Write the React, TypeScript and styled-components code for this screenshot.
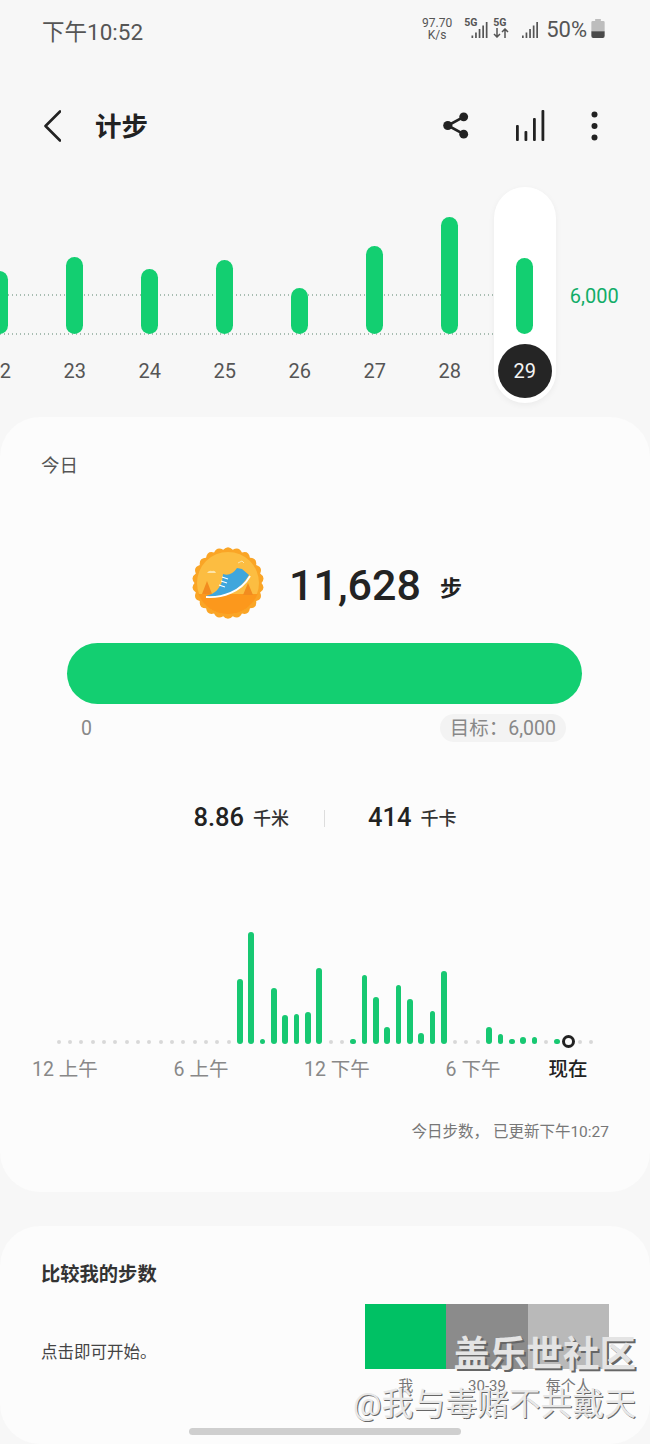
import styled, { createGlobalStyle } from "styled-components";

const GlobalStyle = createGlobalStyle`
  html, body {
    margin: 0;
    padding: 0;
    background: #f7f7f7;
  }
  * {
    box-sizing: border-box;
  }
`;

const Page = styled.div`
  position: relative;
  width: 650px;
  height: 1444px;
  overflow: hidden;
  background: #f7f7f7;
  font-family: Roboto, "Noto Sans CJK SC", sans-serif;
  color: #222;
`;

const StatusBar = styled.div`
  height: 64px;
  padding: 0 45px 0 42px;
  display: flex;
  justify-content: space-between;
  align-items: flex-start;
  color: #555;
`;

const StatusTime = styled.div`
  margin-top: 18px;
  font-size: 22.5px;
  line-height: 28px;
`;

const StatusIcons = styled.div`
  margin-top: 17px;
  display: flex;
  align-items: flex-start;
`;

const NetSpeed = styled.div`
  width: 32px;
  margin: 1px 11px 0 0;
  font-size: 12px;
  line-height: 11.5px;
  text-align: center;
`;

const SimSlot = styled.div<{ $width: number; $gap: number }>`
  position: relative;
  width: ${(p) => p.$width}px;
  height: 21px;
  margin-right: ${(p) => p.$gap}px;
  display: flex;
  justify-content: flex-end;
  align-items: flex-end;
`;

const SimTag = styled.span`
  position: absolute;
  left: 0;
  top: 1px;
  font-size: 10.5px;
  line-height: 10px;
  font-weight: 700;
`;

const BatteryText = styled.span`
  margin: 0 4px 0 0;
  font-size: 22px;
  line-height: 26px;
`;

const BatteryShape = styled.svg`
  margin-top: 2px;
`;

const Toolbar = styled.div`
  height: 123px;
  padding: 0 52px 0 44px;
  display: flex;
  align-items: center;
  color: #222;
`;

const ToolbarTitle = styled.h1`
  margin: 2px 0 0 34px;
  flex: 1;
  font-size: 26.5px;
  line-height: 34px;
  font-weight: 700;
`;

const ToolbarActions = styled.div`
  display: flex;
  align-items: center;
  gap: 46px;
`;

const WeekStrip = styled.div`
  position: relative;
  height: 230px;
`;

const GuideLine = styled.div<{ $top: number }>`
  position: absolute;
  left: 0;
  top: ${(p) => p.$top}px;
  width: 494px;
  height: 2px;
  background: repeating-linear-gradient(to right, #a8bdb2 0 1.5px, transparent 1.5px 4px);
`;

const DayRow = styled.div`
  position: relative;
  display: flex;
  margin-left: -37.7px;
`;

const DayColumn = styled.div<{ $selected?: boolean }>`
  width: 62px;
  height: 216px;
  margin: 0 6.5px;
  display: flex;
  flex-direction: column;
  align-items: center;
  border-radius: 31px;
  background: ${(p) => (p.$selected ? "#fff" : "transparent")};
  box-shadow: ${(p) => (p.$selected ? "0 2px 6px rgba(0, 0, 0, 0.05)" : "none")};
`;

const DayBarSlot = styled.div`
  height: 147px;
  display: flex;
  align-items: flex-end;
`;

const DayBar = styled.div`
  width: 17px;
  border-radius: 9px;
  background: #13cf71;
`;

const DayLabel = styled.div<{ $selected?: boolean }>`
  width: 54px;
  height: 54px;
  margin-top: 10px;
  border-radius: 50%;
  display: flex;
  align-items: center;
  justify-content: center;
  font-size: 20px;
  color: ${(p) => (p.$selected ? "#f4f4f4" : "#555")};
  background: ${(p) => (p.$selected ? "#252525" : "transparent")};
`;

const GoalValue = styled.div`
  margin: 97px 0 0 7.5px;
  font-size: 20px;
  line-height: 24px;
  color: #12ad68;
`;

const Card = styled.section<{ $height: number; $gap: number }>`
  height: ${(p) => p.$height}px;
  margin-bottom: ${(p) => p.$gap}px;
  padding: 0 41px;
  border-radius: 40px;
  background: #fcfcfc;
`;

const CardLabel = styled.div`
  padding-top: 38px;
  font-size: 18.5px;
  line-height: 22px;
  color: #555;
`;

const Hero = styled.div`
  margin-top: 70px;
  height: 72px;
  padding-left: 4px;
  display: flex;
  justify-content: center;
  align-items: center;
`;

const StepCount = styled.div`
  margin: 4px 0 0 25px;
  font-size: 43px;
  line-height: 50px;
  font-weight: 500;
  color: #232323;
`;

const StepUnit = styled.div`
  margin: 12px 0 0 19px;
  font-size: 22px;
  line-height: 28px;
  font-weight: 700;
`;

const Progress = styled.div`
  height: 61px;
  margin: 24px 27px 0 26px;
  border-radius: 31px;
  background: #13cf71;
`;

const GoalRow = styled.div`
  margin-top: 10px;
  padding: 0 43px 0 40px;
  display: flex;
  justify-content: space-between;
  align-items: flex-start;
  font-size: 19.5px;
  line-height: 30px;
  color: #888;
`;

const GoalPill = styled.div`
  height: 28px;
  padding: 0 10px;
  border-radius: 14px;
  background: #f3f3f3;
`;

const Stats = styled.div`
  margin-top: 58px;
  height: 30px;
  display: flex;
  justify-content: center;
  align-items: center;
`;

const StatValue = styled.span`
  font-size: 25.5px;
  font-weight: 500;
  color: #222;
`;

const StatUnit = styled.span`
  margin-left: 9px;
  font-size: 18px;
  font-weight: 500;
  color: #333;
`;

const StatDivider = styled.div`
  width: 1px;
  height: 17px;
  margin: 2px 43px 0 35px;
  background: #ddd;
`;

const Ticks = styled.div`
  margin: 92px 0 0 12px;
  height: 120px;
  display: flex;
  align-items: flex-end;
`;

const TickSlot = styled.div`
  width: 11.333px;
  flex: none;
  display: flex;
  justify-content: center;
  align-items: flex-end;
`;

const TickDot = styled.div`
  width: 4px;
  height: 4px;
  border-radius: 50%;
  background: #d8d8d8;
`;

const TickBar = styled.div`
  width: 5.5px;
  border-radius: 3px;
  background: #17c872;
`;

const TickNow = styled.div`
  flex: none;
  width: 13px;
  height: 13px;
  margin-bottom: -4px;
  border: 3.5px solid #222;
  border-radius: 50%;
  background: #fcfcfc;
`;

const Axis = styled.div`
  margin: 14px 0 0 -44px;
  display: flex;
  font-size: 19.5px;
  line-height: 24px;
  color: #888;
`;

const AxisLabel = styled.div`
  width: 136px;
  text-align: center;
`;

const AxisNow = styled.div`
  width: 54px;
  text-align: center;
  font-weight: 500;
  color: #222;
`;

const Updated = styled.div`
  margin-top: 40px;
  font-size: 15.5px;
  line-height: 20px;
  text-align: right;
  color: #777;
`;

const CompareTitle = styled.h2`
  margin: 0;
  padding-top: 37px;
  font-size: 19.3px;
  line-height: 24px;
  font-weight: 700;
  color: #333;
`;

const CompareRow = styled.div`
  margin-top: 17px;
  display: flex;
  justify-content: space-between;
`;

const CompareHint = styled.div`
  padding-top: 39px;
  font-size: 16.5px;
  line-height: 20px;
  color: #444;
`;

const CompareBars = styled.div`
  width: 244px;
  display: grid;
  grid-template-columns: repeat(3, 1fr);
`;

const CompareColumn = styled.div`
  text-align: center;
  font-size: 15px;
  line-height: 18px;
  color: #777;
`;

const CompareSwatch = styled.div<{ $color: string }>`
  height: 65px;
  margin-bottom: 8px;
  background: ${(p) => p.$color};
`;

const WatermarkTitle = styled.div`
  position: absolute;
  right: 14px;
  top: 1332px;
  font-size: 36.5px;
  line-height: 46px;
  font-weight: 700;
  color: #e4e4e4;
  text-shadow: 2px 2px 0 #666;
`;

const WatermarkUser = styled.div`
  position: absolute;
  right: 14px;
  top: 1384px;
  font-size: 31.8px;
  line-height: 40px;
  color: #e8e8e8;
  text-shadow: 1px 1px 0 #666;
  white-space: nowrap;
`;

const HomeBar = styled.div`
  position: absolute;
  left: 189px;
  top: 1428px;
  width: 272px;
  height: 7px;
  border-radius: 4px;
  background: #cfcfcf;
`;

const weekDays = [
  { day: "22", height: 63 },
  { day: "23", height: 77 },
  { day: "24", height: 65 },
  { day: "25", height: 74 },
  { day: "26", height: 46 },
  { day: "27", height: 88 },
  { day: "28", height: 117 },
  { day: "29", height: 76, selected: true },
];

// half hour slots, 0 means just the grey dot
const hourly: Record<number, number> = {
  16: 65, 17: 112, 18: 5, 19: 56, 20: 29, 21: 30, 22: 32, 23: 76,
  26: 5, 27: 69, 28: 47, 29: 17, 30: 59, 31: 45, 32: 11, 33: 33, 34: 73,
  38: 17, 39: 10, 40: 5, 41: 7, 42: 7, 44: 5,
};

function badgePath() {
  const points = 22;
  const parts: string[] = [];
  for (let i = 0; i < points; i++) {
    const a = (i / points) * Math.PI * 2;
    const mid = ((i + 0.5) / points) * Math.PI * 2;
    const next = ((i + 1) / points) * Math.PI * 2;
    const x = 36 + 33.5 * Math.cos(a);
    const y = 36 + 33.5 * Math.sin(a);
    if (i === 0) parts.push(`M${x.toFixed(2)} ${y.toFixed(2)}`);
    const cx = 36 + 38.5 * Math.cos(mid);
    const cy = 36 + 38.5 * Math.sin(mid);
    const nx = 36 + 33.5 * Math.cos(next);
    const ny = 36 + 33.5 * Math.sin(next);
    parts.push(`Q${cx.toFixed(2)} ${cy.toFixed(2)} ${nx.toFixed(2)} ${ny.toFixed(2)}`);
  }
  return parts.join(" ") + "Z";
}

function Badge() {
  return (
    <svg width="72" height="72" viewBox="0 0 72 72">
      <path d={badgePath()} fill="#faa526" />
      <circle cx="36" cy="36" r="31" fill="#fcbd41" />
      <path d="M6.5 47 H65.5 A31 31 0 0 1 36 67 A31 31 0 0 1 6.5 47Z" fill="#fc981c" />
      <path d="M15 34 L20 47 H10Z" fill="#f28c1f" />
      <path d="M56 36 L61 48 H51Z" fill="#f28c1f" />
      <path d="M15 26 q2-3 5-2 q3-1 4 2Z" fill="#fde4a8" />
      <path d="M46 16 l4-2 l2 2" stroke="#fde4a8" strokeWidth="1" fill="none" />
      <path d="M14 49 C23 47 27 42 30 35 L31 27 C36 29 41 27 45 21 L50 22 L57 28 C53 35 47 41 40 45 C32 49 22 50 14 49Z" fill="#3fa6dc" />
      <path d="M14 50 C30 51 49 45 58 29" stroke="#fff" strokeWidth="1.8" fill="none" />
      <path d="M27 38 l6 2 M29 34 l6 2 M30 30 l6 2" stroke="#fff" strokeWidth="1.3" />
    </svg>
  );
}

function SignalBars({ width = 16, height = 16 }: { width?: number; height?: number }) {
  return (
    <svg width={width} height={height} viewBox="0 0 16 16" fill="#555">
      <rect x="0" y="13.5" width="1.7" height="2.5" />
      <rect x="3.6" y="10.5" width="1.7" height="5.5" />
      <rect x="7.2" y="7" width="1.7" height="9" />
      <rect x="10.8" y="3.5" width="1.7" height="12.5" />
      <rect x="14.3" y="0" width="1.7" height="16" />
    </svg>
  );
}

function Arrows() {
  return (
    <svg width="16" height="10" viewBox="0 0 16 10" fill="none" stroke="#555" strokeWidth="1.5">
      <path d="M4 0 V9 M1 6 L4 9 L7 6" />
      <path d="M12 10 V1 M9 4 L12 1 L15 4" />
    </svg>
  );
}

function Battery() {
  return (
    <BatteryShape width="14" height="19" viewBox="0 0 14 20">
      <path d="M4 0 H10 V2 H12.5 Q14 2 14 3.5 V13 H0 V3.5 Q0 2 1.5 2 H4Z" fill="#bdbdbd" />
      <path d="M0 13 H14 V18 Q14 20 12 20 H2 Q0 20 0 18Z" fill="#4a4a4a" />
    </BatteryShape>
  );
}

function BackIcon() {
  return (
    <svg width="17" height="32" viewBox="0 0 17 32" fill="none" stroke="#222" strokeWidth="2.6" strokeLinecap="round" strokeLinejoin="round">
      <path d="M16 1.5 L1.5 16 L16 30.5" />
    </svg>
  );
}

function ShareIcon() {
  return (
    <svg width="26" height="27" viewBox="0 0 27 28" fill="#222">
      <circle cx="21.5" cy="5" r="4.6" />
      <circle cx="21.5" cy="23" r="4.6" />
      <circle cx="5" cy="14" r="4.8" />
      <path d="M21.5 5 L5 14 L21.5 23" fill="none" stroke="#222" strokeWidth="2.8" />
    </svg>
  );
}

function TrendIcon() {
  return (
    <svg width="30" height="31" viewBox="0 0 30 31" fill="#222">
      <rect x="1" y="15" width="2.8" height="16" rx="1" />
      <rect x="9.5" y="21" width="2.8" height="10" rx="1" />
      <rect x="18" y="8" width="2.8" height="23" rx="1" />
      <rect x="26.5" y="0" width="2.8" height="31" rx="1" />
    </svg>
  );
}

function MoreIcon() {
  return (
    <svg width="7" height="30" viewBox="0 0 7 30" fill="#222">
      <circle cx="3.5" cy="3.5" r="3" />
      <circle cx="3.5" cy="15" r="3" />
      <circle cx="3.5" cy="26.5" r="3" />
    </svg>
  );
}

export default function App() {
  return (
    <Page>
      <GlobalStyle />
      <StatusBar>
        <StatusTime>下午10:52</StatusTime>
        <StatusIcons>
          <NetSpeed>
            97.70
            <br />
            K/s
          </NetSpeed>
          <SimSlot $width={24} $gap={5}>
            <SimTag>5G</SimTag>
            <SignalBars width={17} height={16} />
          </SimSlot>
          <SimSlot $width={16} $gap={13}>
            <SimTag>5G</SimTag>
            <Arrows />
          </SimSlot>
          <SimSlot $width={16} $gap={8}>
            <SignalBars />
          </SimSlot>
          <BatteryText>50%</BatteryText>
          <Battery />
        </StatusIcons>
      </StatusBar>

      <Toolbar>
        <BackIcon />
        <ToolbarTitle>计步</ToolbarTitle>
        <ToolbarActions>
          <ShareIcon />
          <TrendIcon />
          <MoreIcon />
        </ToolbarActions>
      </Toolbar>

      <WeekStrip>
        <GuideLine $top={107} />
        <GuideLine $top={146} />
        <DayRow>
          {weekDays.map((d) => (
            <DayColumn key={d.day} $selected={d.selected}>
              <DayBarSlot>
                <DayBar style={{ height: d.height }} />
              </DayBarSlot>
              <DayLabel $selected={d.selected}>{d.day}</DayLabel>
            </DayColumn>
          ))}
          <GoalValue>6,000</GoalValue>
        </DayRow>
      </WeekStrip>

      <Card $height={775} $gap={34}>
        <CardLabel>今日</CardLabel>
        <Hero>
          <Badge />
          <StepCount>11,628</StepCount>
          <StepUnit>步</StepUnit>
        </Hero>
        <Progress />
        <GoalRow>
          <span>0</span>
          <GoalPill>目标：6,000</GoalPill>
        </GoalRow>
        <Stats>
          <StatValue>8.86</StatValue>
          <StatUnit>千米</StatUnit>
          <StatDivider />
          <StatValue>414</StatValue>
          <StatUnit>千卡</StatUnit>
        </Stats>
        <Ticks>
          {Array.from({ length: 48 }, (_, i) => (
            <TickSlot key={i}>
              {i === 45 ? (
                <TickNow />
              ) : hourly[i] ? (
                <TickBar style={{ height: hourly[i] }} />
              ) : (
                <TickDot />
              )}
            </TickSlot>
          ))}
        </Ticks>
        <Axis>
          <AxisLabel>12 上午</AxisLabel>
          <AxisLabel>6 上午</AxisLabel>
          <AxisLabel>12 下午</AxisLabel>
          <AxisLabel>6 下午</AxisLabel>
          <AxisNow>现在</AxisNow>
        </Axis>
        <Updated>今日步数， 已更新下午10:27</Updated>
      </Card>

      <Card $height={218} $gap={0}>
        <CompareTitle>比较我的步数</CompareTitle>
        <CompareRow>
          <CompareHint>点击即可开始。</CompareHint>
          <CompareBars>
            <CompareColumn>
              <CompareSwatch $color="#00c164" />
              我
            </CompareColumn>
            <CompareColumn>
              <CompareSwatch $color="#8b8b8b" />
              30-39
            </CompareColumn>
            <CompareColumn>
              <CompareSwatch $color="#b9b9b9" />
              每个人
            </CompareColumn>
          </CompareBars>
        </CompareRow>
      </Card>

      <WatermarkTitle>盖乐世社区</WatermarkTitle>
      <WatermarkUser>@我与毒赌不共戴天</WatermarkUser>
      <HomeBar />
    </Page>
  );
}
